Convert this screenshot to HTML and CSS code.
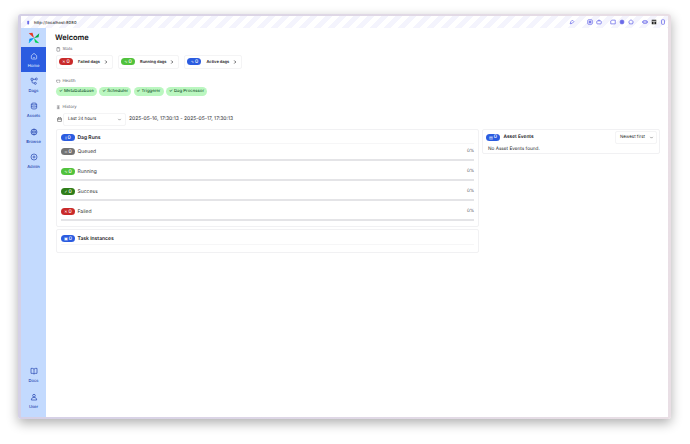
FILE: index.html
```html
<!DOCTYPE html>
<html lang="en">
<head>
<meta charset="utf-8">
<title>Airflow</title>
<link rel="stylesheet" href="styles.css">
</head>
<body>
<div class="window">
  <header class="toolbar">
    <svg class="lock" viewBox="0 0 8 8"><rect x="2" y="1" width="3" height="6" rx="1.2" fill="#6a6ae8"/></svg>
    <span class="url">http://localhost:8080</span>
    <div class="tools">
      <svg class="tool tool-pen" viewBox="0 0 8 8"><path d="M1.500 6.500l1-3 2-2 2 2-2 2z"/></svg>
      <svg class="tool" viewBox="0 0 8 8"><rect x="1" y="1" width="6" height="6" rx="1"/><rect x="3" y="3" width="2" height="2"/></svg>
      <svg class="tool" viewBox="0 0 8 8"><rect x="1" y="2.500" width="6" height="4" rx="1"/><path d="M3 2.500v-1h2v1"/></svg>
      <span class="sep"></span>
      <svg class="tool" viewBox="0 0 8 8"><path d="M1 2.500l1.500-1H7v5H1z"/></svg>
      <svg class="tool" viewBox="0 0 8 8"><circle cx="4" cy="4" r="2.600" fill="#6a6ae8"/></svg>
      <svg class="tool" viewBox="0 0 8 8"><path d="M4 1l3 2.500-1 3H2l-1-3z"/></svg>
      <span class="sep"></span>
      <svg class="tool" viewBox="0 0 8 8"><rect x="1" y="2" width="6" height="4" rx="2"/><path d="M0 4h8"/></svg>
      <svg class="tool tool-dark" viewBox="0 0 8 8"><rect x="1" y="1" width="6" height="6" fill="#222"/><path d="M1 3h6M4 3v4" stroke="#fff" fill="none"/></svg>
      <svg class="tool" viewBox="0 0 8 8"><rect x="2" y="1" width="4" height="6" rx="1"/></svg>
    </div>
  </header>
  <div class="app">
    <nav class="sidebar">
      <div class="logo">
        <svg viewBox="0 0 16 16" class="logo-svg">
          <path d="M8 8L1 1.500 6 1z" fill="#e43921"/>
          <path d="M8 8L15 1.500 14 7z" fill="#00ad46"/>
          <path d="M8 8L15 15 9.500 14z" fill="#04d659"/>
          <path d="M8 8L1 15 2 9z" fill="#017cee"/>
          <path d="M8 8L2 12 1 15z" fill="#11e1ee"/>
        </svg>
      </div>
      <a class="nav-item nav-active">
        <svg class="nav-icon" viewBox="0 0 24 24"><path d="M4 11l8-7 8 7v8a2 2 0 0 1-2 2H6a2 2 0 0 1-2-2z"/><path d="M9 16c2 1.500 4 1.500 6 0"/></svg>
        <span>Home</span>
      </a>
      <a class="nav-item">
        <svg class="nav-icon" viewBox="0 0 24 24"><rect x="3" y="4" width="6" height="6" rx="1"/><circle cx="19" cy="6" r="3"/><circle cx="16" cy="19" r="3"/><path d="M9 7h7M6 10v5a3 3 0 0 0 3 3h4"/></svg>
        <span>Dags</span>
      </a>
      <a class="nav-item">
        <svg class="nav-icon" viewBox="0 0 24 24"><ellipse cx="12" cy="6" rx="8" ry="3"/><path d="M4 6v12c0 1.700 3.600 3 8 3s8-1.300 8-3V6M4 12c0 1.700 3.600 3 8 3s8-1.300 8-3"/></svg>
        <span>Assets</span>
      </a>
      <a class="nav-item">
        <svg class="nav-icon" viewBox="0 0 24 24"><circle cx="12" cy="12" r="9"/><path d="M3 12h18M12 3c5 5 5 13 0 18M12 3c-5 5-5 13 0 18"/></svg>
        <span>Browse</span>
      </a>
      <a class="nav-item">
        <svg class="nav-icon" viewBox="0 0 24 24"><circle cx="12" cy="12" r="3"/><circle cx="12" cy="12" r="9"/></svg>
        <span>Admin</span>
      </a>
      <div class="nav-spacer"></div>
      <a class="nav-item">
        <svg class="nav-icon" viewBox="0 0 24 24"><path d="M12 6c-2-2-5-2-9-2v15c4 0 7 0 9 2 2-2 5-2 9-2V4c-4 0-7 0-9 2zM12 6v15"/></svg>
        <span>Docs</span>
      </a>
      <a class="nav-item">
        <svg class="nav-icon" viewBox="0 0 24 24"><circle cx="12" cy="8" r="4"/><path d="M4 21c0-5 3-8 8-8s8 3 8 8z"/></svg>
        <span>User</span>
      </a>
    </nav>
    <main class="content">
      <h1 class="title">Welcome</h1>

      <div class="section-label">
        <svg class="mini" viewBox="0 0 8 8"><rect x="1.500" y="1" width="5" height="6.500" rx=".6"/><path d="M3 1v1h2V1"/></svg>
        <span>Stats</span>
      </div>
      <div class="stats">
        <div class="stat-card"><span class="pill red"><b class="glyph">✕</b> 0</span><strong>Failed dags</strong><svg class="chev" viewBox="0 0 8 8"><path d="M3 2l2 2-2 2"/></svg></div>
        <div class="stat-card"><span class="pill lime"><b class="glyph">∿</b> 0</span><strong>Running dags</strong><svg class="chev" viewBox="0 0 8 8"><path d="M3 2l2 2-2 2"/></svg></div>
        <div class="stat-card"><span class="pill blue"><b class="glyph">∿</b> 0</span><strong>Active dags</strong><svg class="chev" viewBox="0 0 8 8"><path d="M3 2l2 2-2 2"/></svg></div>
      </div>

      <div class="section-label gap-label">
        <svg class="mini" viewBox="0 0 8 8"><path d="M1 2h6v2c0 2-2 3-3 3.500C3 7 1 6 1 4z"/></svg>
        <span>Health</span>
      </div>
      <div class="health">
        <span class="chip">✓ MetaDatabase</span>
        <span class="chip">✓ Scheduler</span>
        <span class="chip">✓ Triggerer</span>
        <span class="chip">✓ Dag Processor</span>
      </div>

      <div class="section-label history-label">
        <svg class="mini" viewBox="0 0 8 8"><path d="M1.500 1.500h5M1.500 4h5M1.500 6.500h5M4 1.500v5"/></svg>
        <span>History</span>
      </div>
      <div class="range">
        <svg class="cal" viewBox="0 0 8 8"><rect x="1" y="1.500" width="6" height="6" rx="1"/><path d="M1 3.500h6M2.500 .6v1.500M5.500 .6v1.500"/></svg>
        <div class="select"><span>Last 24 hours</span><svg class="caret" viewBox="0 0 8 8"><path d="M2 3l2 2 2-2"/></svg></div>
        <span class="dates">2025-05-16, 17:30:13 - 2025-05-17, 17:30:13</span>
      </div>

      <div class="columns">
        <div class="col-left">
          <section class="panel runs">
            <div class="panel-head"><span class="pill blue"><b class="glyph">⫾</b> 0</span><strong>Dag Runs</strong></div>
            <div class="run"><div class="run-row"><span class="pill grey"><b class="glyph">=</b> 0</span><span class="run-name">Queued</span><span class="pct">0%</span></div><div class="bar"></div></div>
            <div class="run"><div class="run-row"><span class="pill lime"><b class="glyph">∿</b> 0</span><span class="run-name">Running</span><span class="pct">0%</span></div><div class="bar"></div></div>
            <div class="run"><div class="run-row"><span class="pill green"><b class="glyph">✓</b> 0</span><span class="run-name">Success</span><span class="pct">0%</span></div><div class="bar"></div></div>
            <div class="run"><div class="run-row"><span class="pill red"><b class="glyph">✕</b> 0</span><span class="run-name">Failed</span><span class="pct">0%</span></div><div class="bar"></div></div>
          </section>
          <section class="panel tasks">
            <div class="panel-head task-head"><span class="pill blue"><b class="glyph">▣</b> 0</span><strong>Task Instances</strong></div>
          </section>
        </div>
        <section class="panel events">
          <div class="events-head">
            <span class="pill blue"><b class="glyph">▤</b> 0</span><strong>Asset Events</strong>
            <div class="sort"><span>Newest first</span><svg class="caret" viewBox="0 0 8 8"><path d="M2 3l2 2 2-2"/></svg></div>
          </div>
          <p class="empty">No Asset Events found.</p>
        </section>
      </div>
    </main>
  </div>
</div>
</body>
</html>
```
FILE: styles.css
```css
* { box-sizing: border-box; }
html, body { height: 100%; }
body {
  margin: 0;
  padding: 14px 19px 25px 18px;
  background: #fff;
  font-family: Inter, "Liberation Sans", sans-serif;
  color: #18181b;
  text-rendering: geometricPrecision;
  overflow: hidden;
}
svg { display: block; flex: none; }

.window {
  height: 405px;
  padding: 2px 3px;
  border-radius: 3px;
  background: linear-gradient(90deg, #d5d0e6, #e9dfe5);
  box-shadow: 0 4px 12px rgba(0, 0, 0, .32);
  display: flex;
  flex-direction: column;
}

.toolbar {
  height: 12px;
  flex: none;
  display: flex;
  align-items: center;
  padding: 0 2px 0 5px;
  background: repeating-linear-gradient(135deg, #fff 0 5px, #f4f4fd 5px 10px);
}
.lock { width: 5px; height: 5px; }
.url { margin-left: 3px; font-size: 4px; font-weight: 500; color: #333; letter-spacing: .1px; }
.tools { margin-left: auto; display: flex; align-items: center; gap: 3px; }
.tool { width: 6px; height: 6px; fill: none; stroke: #6a6ae8; stroke-width: 1; }
.tool-pen { margin-right: 9px; }
.tool-dark { stroke: none; }
.sep { width: 2px; }

.app { flex: 1; display: flex; min-height: 0; background: #fff; }

.sidebar {
  width: 25px;
  flex: none;
  background: #c3dafe;
  display: flex;
  flex-direction: column;
  padding-bottom: 3.500px;
}
.logo { height: 19px; flex: none; display: flex; align-items: center; justify-content: center; }
.logo-svg { width: 12px; height: 12px; }
.nav-item {
  height: 25.400px;
  flex: none;
  display: flex;
  flex-direction: column;
  align-items: center;
  justify-content: center;
  gap: 3px;
  font-size: 4.100px;
  font-weight: 500;
  color: #1e3fae;
}
.nav-active { background: #2b5ce0; color: #dbe7ff; }
.nav-icon { width: 8px; height: 8px; fill: none; stroke: currentColor; stroke-width: 2; }
.nav-spacer { flex: 1; }

.content { flex: 1; min-width: 0; padding: 4px 9px 0; }
.title { margin: 0; font-size: 7.500px; line-height: 12px; font-weight: 600; color: #111; }

.section-label {
  margin-top: 2px;
  height: 7px;
  display: flex;
  align-items: center;
  gap: 2px;
  padding-left: 1px;
  font-size: 4.200px;
  color: #52525b;
}
.mini { width: 4.500px; height: 4.500px; fill: none; stroke: #3f3f46; stroke-width: .7; }
.gap-label { margin-top: 9px; }
.history-label { margin-top: 8.500px; }

.stats { margin-top: 2px; display: flex; gap: 5px; padding-left: 1px; }
.stat-card {
  height: 13.500px;
  display: flex;
  align-items: center;
  padding: 0 3px 0 2px;
  border: 1px solid #f4f4f5;
  border-radius: 2px;
  font-size: 4px;
}
.stat-card strong { font-weight: 600; margin-left: 5px; }
.chev { width: 6px; height: 6px; margin-left: 3px; fill: none; stroke: #18181b; stroke-width: .9; }

.pill {
  width: 14px;
  height: 7px;
  flex: none;
  border-radius: 4px;
  display: inline-flex;
  align-items: center;
  justify-content: center;
  gap: 1px;
  color: #fff;
  font-size: 5px;
  font-weight: 500;
}
.glyph { font-size: 4px; font-weight: 400; font-family: "DejaVu Sans", sans-serif; }
.red { background: #c92a2a; }
.lime { background: #51c23c; }
.blue { background: #2b5ce0; }
.grey { background: #737373; }
.green { background: #2f7d18; }

.health { margin-top: 2px; padding-left: 1px; display: flex; gap: 2.500px; }
.chip {
  height: 9px;
  display: inline-flex;
  align-items: center;
  padding: 0 3px;
  border-radius: 4.500px;
  background: #bbf7c0;
  color: #14532d;
  font-size: 4.300px;
  font-weight: 500;
}

.range { margin-top: 1px; height: 14px; display: flex; align-items: center; padding-left: 2px; }
.cal { width: 5px; height: 5px; fill: none; stroke: #222; stroke-width: .8; }
.select {
  margin-left: 1px;
  width: 63px;
  height: 13px;
  display: flex;
  align-items: center;
  justify-content: space-between;
  padding: 0 3px 0 4px;
  border: 1px solid #f4f4f5;
  border-radius: 2px;
  font-size: 4.400px;
  color: #333;
}
.caret { width: 5px; height: 5px; fill: none; stroke: #444; stroke-width: .8; }
.dates { margin-left: 3px; font-size: 5px; color: #27272a; }

.columns { margin-top: 3px; display: flex; gap: 3px; padding-left: 1px; align-items: flex-start; }
.col-left { width: 423px; flex: none; display: flex; flex-direction: column; gap: 2px; }
.panel { border: 1px solid #f1f1f3; border-radius: 2px; background: #fff; }
.runs { height: 98px; padding: 2px 4px 0; }
.panel-head { height: 12px; display: flex; align-items: center; gap: 2.500px; font-size: 5px; border-bottom: 1px solid #f6f6f7; margin: 0 0 2px; }
.panel-head strong, .events-head strong { font-weight: 600; }
.run { height: 20px; padding-top: 1px; }
.run-row { height: 9px; display: flex; align-items: center; gap: 2.500px; font-size: 5px; color: #333; }
.pct { margin-left: auto; font-size: 4.400px; color: #52525b; }
.bar { margin-top: 3px; height: 2px; background: #e4e4e7; }
.tasks { height: 24px; padding: 3px 4px 0; }
.task-head { margin: 0; }

.events { width: 178px; flex: none; height: 25px; padding: 0 3px; }
.events-head { height: 14px; display: flex; align-items: center; gap: 3.500px; font-size: 4.800px; }
.sort {
  margin-left: auto;
  margin-right: -1px;
  width: 42px;
  height: 13px;
  display: flex;
  align-items: center;
  justify-content: space-between;
  padding: 0 2px 0 4px;
  border: 1px solid #f4f4f5;
  border-radius: 2px;
  font-size: 4.400px;
  color: #333;
}
.empty { margin: 2px 0 0 2px; font-size: 4.700px; color: #27272a; }
```
